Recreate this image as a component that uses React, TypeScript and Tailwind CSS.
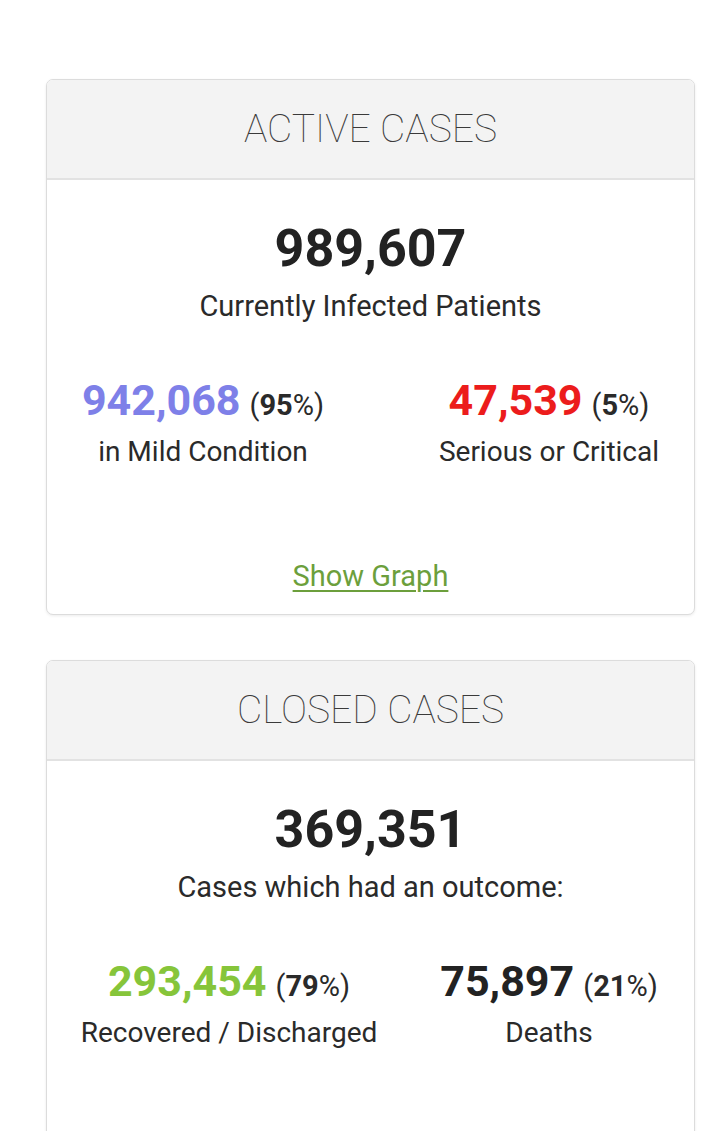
import React from "react";

const font = { fontFamily: "Roboto, 'Noto Sans', Arial, sans-serif" };

function Stat({
  num,
  pct,
  label,
  color,
  w,
  ml,
}: {
  num: string;
  pct: string;
  label: string;
  color: string;
  w: string;
  ml: string;
}) {
  return (
    <div className={`${w} ${ml} flex flex-col items-center shrink-0`}>
      <div className="flex items-baseline whitespace-nowrap leading-none h-[43px]">
        <span className={`text-[43px] font-bold ${color}`}>{num}</span>
        <span className="ml-[9px] text-[29px] text-[#2a2a2a]">
          (<span className="font-bold">{pct}</span>%)
        </span>
      </div>
      <div className="mt-[16px] text-[28px] leading-none text-[#2a2a2a] whitespace-nowrap">
        {label}
      </div>
    </div>
  );
}

function Header({ title }: { title: string }) {
  return (
    <div className="h-[100px] bg-[#f3f3f3] border-b-[2px] border-[#e2e2e2] flex items-center justify-center">
      <span className="text-[39px] font-thin text-[#3a3a3a] leading-none">{title}</span>
    </div>
  );
}

function Lead({ num, label }: { num: string; label: string }) {
  return (
    <div className="flex flex-col items-center pt-[43px]">
      <div className="text-[52px] font-bold leading-none text-[#222]">{num}</div>
      <div className="mt-[17px] text-[29px] leading-none text-[#2a2a2a]">{label}</div>
    </div>
  );
}

export default function App() {
  return (
    <div className="w-[720px] h-[1131px] bg-white overflow-hidden" style={font}>
      <div className="pt-[79px] pl-[46px]">
        {/* ACTIVE CASES */}
        <div className="w-[649px] h-[536px] rounded-[7px] border border-[#dcdcdc] shadow-[0_1px_3px_rgba(0,0,0,0.08)] overflow-hidden bg-white">
          <Header title="ACTIVE CASES" />
          <Lead num="989,607" label="Currently Infected Patients" />
          <div className="flex mt-[58px]">
            <Stat num="942,068" pct="95" label="in Mild Condition" color="text-[#7e80e8]" w="w-[290px]" ml="ml-[11px]" />
            <Stat num="47,539" pct="5" label="Serious or Critical" color="text-[#ec1c1c]" w="w-[290px]" ml="ml-[56px]" />
          </div>
          <div className="flex justify-center mt-[96px]">
            <span className="text-[29px] leading-none text-[#6c9f3c] underline underline-offset-[4px] decoration-[2px]">Show Graph</span>
          </div>
        </div>

        {/* CLOSED CASES */}
        <div className="mt-[45px] w-[649px] h-[520px] rounded-[7px] border border-[#dcdcdc] shadow-[0_1px_3px_rgba(0,0,0,0.08)] overflow-hidden bg-white">
          <Header title="CLOSED CASES" />
          <Lead num="369,351" label="Cases which had an outcome:" />
          <div className="flex mt-[58px]">
            <Stat num="293,454" pct="79" label="Recovered / Discharged" color="text-[#86c53a]" w="w-[300px]" ml="ml-[32px]" />
            <Stat num="75,897" pct="21" label="Deaths" color="text-[#222]" w="w-[290px]" ml="ml-[25px]" />
          </div>
        </div>
      </div>
    </div>
  );
}
